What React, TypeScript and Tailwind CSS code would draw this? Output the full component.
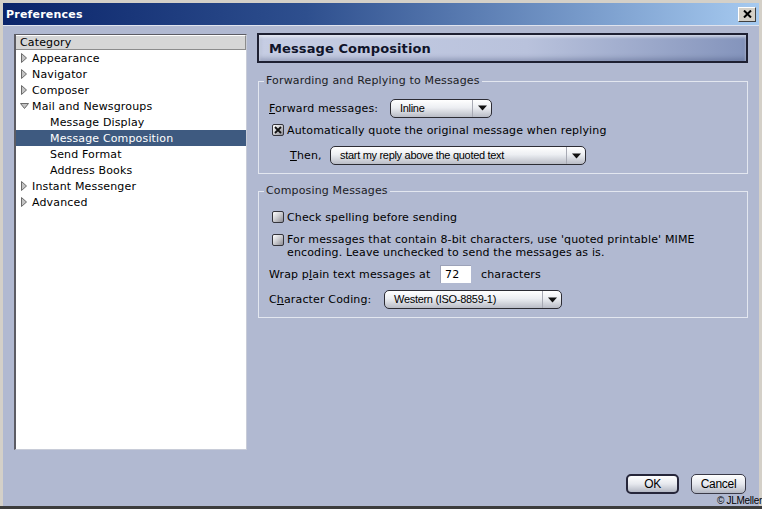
import React from 'react';

const ui = "font-['DejaVu_Sans',sans-serif] text-[11px] leading-[13px] tracking-[0.15px] text-black";
const narrow = "font-['Liberation_Sans',Arial,sans-serif] text-[11px] tracking-[-0.3px]";

const Triangle: React.FC<{ open?: boolean }> = ({ open }) => (
  <svg width="9" height="10" viewBox="0 0 9 10" className="block">
    {open ? (
      <polygon points="0.5,2.5 8.5,2.5 4.5,7.5" fill="#c4c4c4" stroke="#6a6a6a" strokeWidth="1" />
    ) : (
      <polygon points="1.5,0.5 6.5,5 1.5,9.5" fill="#c4c4c4" stroke="#6a6a6a" strokeWidth="1" />
    )}
  </svg>
);

const Checkbox: React.FC<{ checked?: boolean }> = ({ checked }) => (
  <div className="w-[12px] h-[12px] shrink-0 rounded-[2px] border border-[#34343c] bg-[linear-gradient(135deg,#ffffff,#d0d0d4_45%,#8c8c94)] flex items-center justify-center">
    {checked && (
      <svg width="8" height="8" viewBox="0 0 8 8">
        <path d="M1 1 L7 7 M7 1 L1 7" stroke="#111" strokeWidth="1.8" />
      </svg>
    )}
  </div>
);

const Dropdown: React.FC<{ width: string; text: string }> = ({ width, text }) => (
  <div className={`${width} h-[19px] flex rounded-[5px] border border-[#2c2c34] bg-[linear-gradient(to_bottom,#ffffff,#eceef2_45%,#b9bcc6)] overflow-hidden`}>
    <div className={`flex-1 flex items-center pl-[9px] ${narrow} text-black`}>{text}</div>
    <div className="w-[19px] flex items-center justify-center border-l border-[#a8aab4]">
      <svg width="9" height="6" viewBox="0 0 9 6">
        <polygon points="0,0.5 9,0.5 4.5,5.5" fill="#111" />
      </svg>
    </div>
  </div>
);

const Button: React.FC<{ label: string; def?: boolean; width: string }> = ({ label, def, width }) => (
  <div className={`${width} h-[20px] flex items-center justify-center rounded-[5px] ${def ? 'border-2 border-[#26263a]' : 'border border-[#3a3a48]'} bg-[linear-gradient(to_bottom,#ffffff,#e6e8ee_50%,#b4b8c4)] ${narrow} text-[12px] text-black`}>
    {label}
  </div>
);

const tree = [
  { label: 'Appearance', level: 0 },
  { label: 'Navigator', level: 0 },
  { label: 'Composer', level: 0 },
  { label: 'Mail and Newsgroups', level: 0, open: true },
  { label: 'Message Display', level: 1 },
  { label: 'Message Composition', level: 1, selected: true },
  { label: 'Send Format', level: 1 },
  { label: 'Address Books', level: 1 },
  { label: 'Instant Messenger', level: 0 },
  { label: 'Advanced', level: 0 },
];

export default function App() {
  return (
    <div className={`relative w-[762px] h-[509px] flex flex-col overflow-hidden bg-[#d4d0c8] px-[3px] pt-[3px] border-b-[3px] border-b-[#3c3c3c] ${ui}`}>
      {/* title bar */}
      <div className="h-[22px] shrink-0 flex items-center justify-between pl-[3px] pr-[3px] bg-[linear-gradient(to_right,#0a246a,#2e4f8e_40%,#a6caf0)]">
        <span className="font-['DejaVu_Sans',sans-serif] font-bold text-[11px] tracking-[0.2px] text-white">Preferences</span>
        <div className="w-[18px] h-[15px] bg-[#d4d0c8] border border-t-white border-l-white border-r-[#404040] border-b-[#404040] flex items-center justify-center">
          <svg width="9" height="8" viewBox="0 0 9 8">
            <path d="M1 0.5 L8 7.5 M8 0.5 L1 7.5" stroke="#000" strokeWidth="2" />
          </svg>
        </div>
      </div>

      {/* body */}
      <div className="flex-1 flex flex-col bg-[#b1b9d1] pl-[11px] pt-[8px] border-t border-[#dfe3ee]">
        <div className="flex gap-[10px]">
          {/* category tree */}
          <div className="w-[233px] h-[416px] bg-white border-l-2 border-t border-l-[#5c5c64] border-t-[#5c5c64] border-r border-b border-r-[#c8ccd8] border-b-[#c8ccd8] flex flex-col">
            <div className="h-[15px] flex items-center pl-[4px] bg-[#d6d6d6] border-b border-r border-[#8c8c8c] border-t border-t-white">Category</div>
            {tree.map((t) => (
              <div
                key={t.label}
                className={`h-[16px] flex items-center ${t.selected ? 'bg-[#3e5a80] text-white' : ''} ${t.level === 0 ? 'pl-[4px]' : 'pl-[34px]'}`}
              >
                {t.level === 0 && (
                  <div className="w-[12px] flex items-center">
                    <Triangle open={t.open} />
                  </div>
                )}
                <span>{t.label}</span>
              </div>
            ))}
          </div>

          {/* right content */}
          <div className="w-[491px] -mt-[1px] flex flex-col">
            <div className="h-[30px] flex items-center pl-[10px] border-2 border-[#1e2032] bg-[linear-gradient(to_right,#c6cde3,#b9c2dc_55%,#8494bc)] shadow-[inset_0_2px_3px_rgba(255,255,255,0.6),inset_0_-3px_4px_rgba(40,50,90,0.25)]">
              <span className="font-['DejaVu_Sans',sans-serif] font-bold text-[13px] tracking-[0.1px] text-[#10142a]">Message Composition</span>
            </div>

            <fieldset className="mt-[11px] ml-[1px] border border-[#e3e7f0] px-0 pt-[10px] pb-[8px] pl-[10px] m-0 min-w-0">
              <legend className="-ml-[5px] px-[2px] leading-[14px] text-[#1c1c24]">Forwarding and Replying to Messages</legend>
              <div className="h-[20px] flex items-center">
                <span className="w-[121px]"><u>F</u>orward messages:</span>
                <Dropdown width="w-[102px]" text="Inline" />
              </div>
              <div className="mt-[4px] h-[16px] flex items-center pl-[3px] gap-[3px]">
                <Checkbox checked />
                <span>Automatically quote the original message when replying</span>
              </div>
              <div className="mt-[8px] h-[19px] flex items-center pl-[21px]">
                <span className="w-[40px]"><u>T</u>hen,</span>
                <Dropdown width="w-[256px]" text="start my reply above the quoted text" />
              </div>
            </fieldset>

            <fieldset className="mt-[10px] ml-[1px] border border-[#e3e7f0] px-0 pt-[11px] pb-[8px] pl-[10px] m-0 min-w-0">
              <legend className="-ml-[5px] px-[2px] leading-[14px] text-[#1c1c24]">Composing Messages</legend>
              <div className="h-[16px] flex items-center pl-[3px] gap-[3px]">
                <Checkbox />
                <span>Check spelling before sending</span>
              </div>
              <div className="mt-[8px] flex items-start pl-[3px] gap-[3px]">
                <div className="mt-[1px]">
                  <Checkbox />
                </div>
                <span className="leading-[13px]">
                  For messages that contain 8-bit characters, use 'quoted printable' MIME
                  <br />
                  encoding. Leave unchecked to send the messages as is.
                </span>
              </div>
              <div className="mt-[6px] h-[18px] flex items-center">
                <span className="w-[171px]">Wrap p<u>l</u>ain text messages at</span>
                <div className="w-[31px] h-[18px] bg-white flex items-center pl-[4px] border-t border-l border-[#9ca2b8]">72</div>
                <span className="ml-[10px]">characters</span>
              </div>
              <div className="mt-[7px] h-[19px] flex items-center">
                <span className="w-[115px]">C<u>h</u>aracter Coding:</span>
                <Dropdown width="w-[178px]" text="Western (ISO-8859-1)" />
              </div>
            </fieldset>
          </div>
        </div>

        {/* buttons */}
        <div className="mt-[24px] flex justify-end gap-[12px] pr-[13px]">
          <Button label="OK" def width="w-[53px]" />
          <Button label="Cancel" width="w-[55px]" />
        </div>
      </div>

      <span className="absolute right-0 bottom-0 font-['Liberation_Sans',Arial,sans-serif] text-[10px] leading-[11px] text-black tracking-[-0.3px]">© JLMeller</span>
    </div>
  );
}
